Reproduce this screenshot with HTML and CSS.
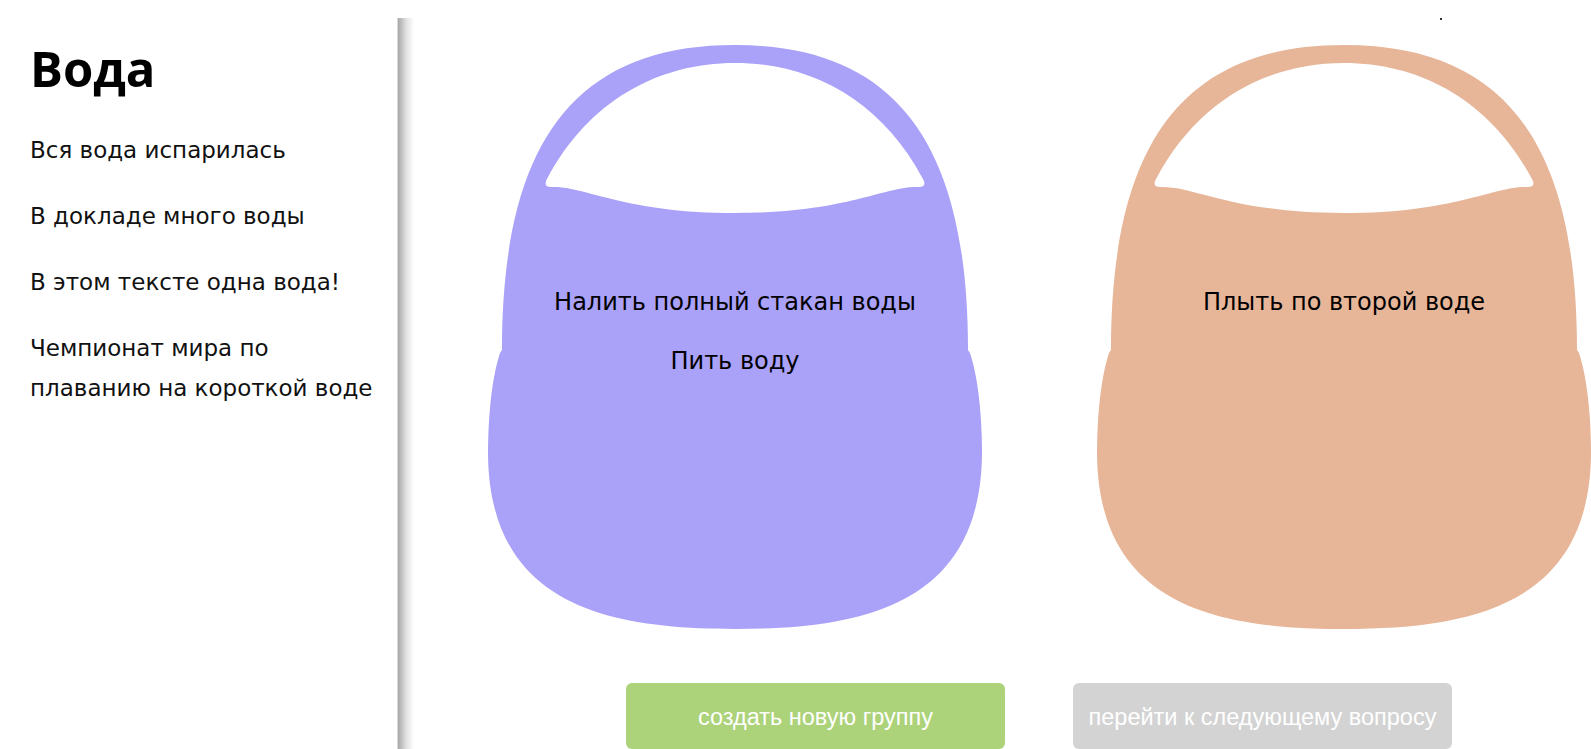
FILE: index.html
```html
<!DOCTYPE html>
<html lang="ru">
<head>
<meta charset="utf-8">
<title>Вода</title>
<link rel="stylesheet" href="styles.css">
</head>
<body>
<aside class="sidebar">
  <h1 class="sidebar-title">Вода</h1>
  <p class="phrase">Вся вода испарилась</p>
  <p class="phrase">В докладе много воды</p>
  <p class="phrase">В этом тексте одна вода!</p>
  <p class="phrase">Чемпионат мира по плаванию на короткой воде</p>
</aside>
<main class="board">
  <span class="stray-dot"></span>
  <div class="baskets">
    <div class="basket basket-violet">
      <svg class="basket-shape" viewBox="0 0 496 584" aria-hidden="true">
        <path fill-rule="evenodd" d="M248,0 C82,0 15,105 15,305 L13,308 C5,332 1,370 1,410 C3,560 120,584 248,584 C376,584 493,560 495,410 C495,370 491,332 483,308 L481,305 C481,105 414,0 248,0 Z M60,134 C102,55 172,18 248,18 C324,18 394,55 436,134 C439,140 437,142 432,142 C400,140 360,168 248,168 C136,168 96,140 64,142 C59,142 57,140 60,134 Z"/>
      </svg>
      <div class="basket-item">Налить полный стакан воды</div>
      <div class="basket-item">Пить воду</div>
    </div>
    <div class="basket basket-peach">
      <svg class="basket-shape" viewBox="0 0 496 584" aria-hidden="true">
        <path fill-rule="evenodd" d="M248,0 C82,0 15,105 15,305 L13,308 C5,332 1,370 1,410 C3,560 120,584 248,584 C376,584 493,560 495,410 C495,370 491,332 483,308 L481,305 C481,105 414,0 248,0 Z M60,134 C102,55 172,18 248,18 C324,18 394,55 436,134 C439,140 437,142 432,142 C400,140 360,168 248,168 C136,168 96,140 64,142 C59,142 57,140 60,134 Z"/>
      </svg>
      <div class="basket-item">Плыть по второй воде</div>
    </div>
  </div>
  <div class="actions">
    <button class="btn btn-create" type="button">создать новую группу</button>
    <button class="btn btn-next" type="button" disabled>перейти к следующему вопросу</button>
  </div>
</main>
</body>
</html>
```

FILE: styles.css
```css
html, body {
  margin: 0;
  padding: 0;
  height: 100%;
  background: #fff;
}

body {
  display: flex;
  height: 749px;
  overflow: hidden;
  font-family: "DejaVu Sans", "Noto Sans", sans-serif;
  color: #000;
}

/* left column with the topic and its phrases */
.sidebar {
  flex: 0 0 397px;
  box-sizing: border-box;
  padding: 39px 20px 0 30px;
}

.sidebar-title {
  margin: 0 0 33px;
  font-family: "Open Sans", "Noto Sans", sans-serif;
  font-size: 49px;
  line-height: 58px;
  font-weight: 700;
}

.phrase {
  margin: 0 0 26px;
  font-size: 23px;
  line-height: 40px;
  color: #111;
}

/* working area with the two groups */
.board {
  position: relative;
  flex: 1 1 auto;
  margin-top: 18px;
  padding: 27px 0 0 90px;
  overflow: hidden;
  background: linear-gradient(to right,
    #dadada 0, #dadada 1px,
    #a9a9a9 1px, #bcbcbc 4px,
    #e0e0e0 9px, #fff 17px) no-repeat left top / 18px 100%;
}

.stray-dot {
  position: absolute;
  top: 0;
  left: 1043px;
  width: 2px;
  height: 2px;
  background: #333;
}

.baskets {
  display: flex;
  gap: 113px;
}

.basket {
  position: relative;
  flex: 0 0 496px;
  height: 584px;
  box-sizing: border-box;
  padding-top: 228px;
  text-align: center;
}

.basket-shape {
  position: absolute;
  inset: 0;
  width: 100%;
  height: 100%;
  z-index: 0;
}

.basket-violet .basket-shape path { fill: #aaa1f8; }
.basket-peach .basket-shape path { fill: #e7b699; }

.basket-item {
  position: relative;
  z-index: 1;
  font-size: 24px;
  line-height: 59px;
}

.actions {
  display: flex;
  gap: 68px;
  margin-top: 54px;
  padding-left: 139px;
}

.btn {
  flex: 0 0 379px;
  height: 66px;
  border: 0;
  border-radius: 6px;
  padding: 3px 0 0;
  color: #fff;
  font-family: "Liberation Sans", Arial, sans-serif;
  font-size: 23.5px;
  cursor: pointer;
}

.btn-create { background: #acd27a; }
.btn-next { background: #d3d3d3; }
```
